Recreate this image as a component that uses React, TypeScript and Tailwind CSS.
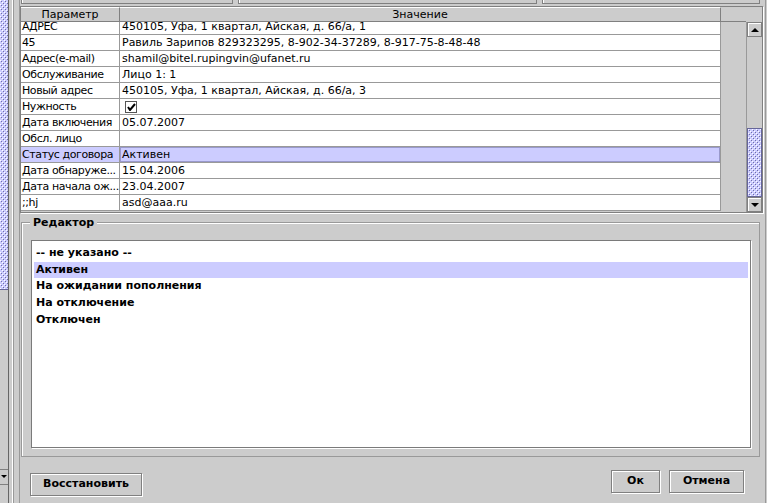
import React from 'react';

type Row = { k: string; v: string; check?: boolean; selected?: boolean };

const rows: Row[] = [
  { k: 'АДРЕС', v: '450105, Уфа, 1 квартал, Айская, д. 66/а, 1' },
  { k: '45', v: 'Равиль Зарипов 829323295, 8-902-34-37289, 8-917-75-8-48-48' },
  { k: 'Адрес(e-mail)', v: 'shamil@bitel.rupingvin@ufanet.ru' },
  { k: 'Обслуживание', v: 'Лицо 1: 1' },
  { k: 'Новый адрес', v: '450105, Уфа, 1 квартал, Айская, д. 66/а, 3' },
  { k: 'Нужность', v: '', check: true },
  { k: 'Дата включения', v: '05.07.2007' },
  { k: 'Обсл. лицо', v: '' },
  { k: 'Статус договора', v: 'Активен', selected: true },
  { k: 'Дата обнаруже...', v: '15.04.2006' },
  { k: 'Дата начала ож...', v: '23.04.2007' },
  { k: ';;hj', v: 'asd@aaa.ru' },
];

const options = ['-- не указано --', 'Активен', 'На ожидании пополнения', 'На отключение', 'Отключен'];

// metal style bumps texture
const Bumps: React.FC<{ id: string }> = ({ id }) => (
  <svg width="100%" height="100%" className="block">
    <defs>
      <pattern id={id} width="4" height="4" patternUnits="userSpaceOnUse">
        <rect width="4" height="4" fill="#ccccff" />
        <rect x="0" y="0" width="1" height="1" fill="#ffffff" />
        <rect x="2" y="2" width="1" height="1" fill="#ffffff" />
        <rect x="1" y="1" width="1" height="1" fill="#6f6fa8" />
        <rect x="3" y="3" width="1" height="1" fill="#6f6fa8" />
      </pattern>
    </defs>
    <rect width="100%" height="100%" fill={`url(#${id})`} />
  </svg>
);

const ArrowBtn: React.FC<{ up?: boolean }> = ({ up }) => (
  <div className="h-[15px] w-[15px] shrink-0 border border-[#808080] bg-[#cccccc] shadow-[inset_1px_1px_0_#ffffff] flex items-center justify-center">
    <svg width="8" height="4" viewBox="0 0 8 4">
      {up ? <path d="M0 4 L4 0 L8 4 Z" fill="#000" /> : <path d="M0 0 L8 0 L4 4 Z" fill="#000" />}
    </svg>
  </div>
);

const Button: React.FC<{ label: string; w: string }> = ({ label, w }) => (
  <button className={`${w} h-[23px] border border-[#808080] shadow-[inset_1px_1px_0_#ffffff,1px_1px_0_#ffffff] bg-[#cccccc] text-[11px] font-bold text-black`}>
    {label}
  </button>
);

export default function App() {
  return (
    <div className="flex w-[767px] h-[503px] overflow-hidden bg-[#cccccc] font-['DejaVu_Sans',sans-serif] text-black">
      {/* neighbour scrollbar on the left */}
      <div className="w-[9px] shrink-0 flex flex-col border-r border-[#666666]">
        <div className="h-[290px] border-b border-[#666699]">
          <Bumps id="lb" />
        </div>
        <div className="flex-1" />
        <div className="h-[16px] flex items-center justify-end pr-[1px] border-t border-b border-[#808080]">
          <svg width="6" height="4" viewBox="0 0 6 4">
            <path d="M0 0 L6 0 L3 3 Z" fill="#000" />
          </svg>
        </div>
        <div className="h-[18px]" />
      </div>

      {/* split divider */}
      <div className="w-[11px] shrink-0 flex">
        <div className="w-[3px]" />
        <div className="w-[1px] bg-white" />
        <div className="w-[1px] bg-[#999999]" />
        <div className="w-[5px]" />
        <div className="w-[1px] bg-[#999999]" />
      </div>

      {/* main */}
      <div className="w-[743px] shrink-0 flex flex-col">
        {/* cut off buttons on top */}
        <div className="h-[6px] flex gap-[5px] pl-[1px]">
          <div className="w-[212px] h-[4px] border-x border-b border-[#808080] shadow-[inset_1px_0_0_#ffffff]" />
          <div className="w-[299px] h-[4px] border-x border-b border-[#808080] shadow-[inset_1px_0_0_#ffffff]" />
          <div className="w-[218px] h-[4px] border-x border-b border-[#808080] shadow-[inset_1px_0_0_#ffffff]" />
        </div>

        {/* table scroll pane */}
        <div className="h-[207px] flex border border-[#808080] shadow-[1px_1px_0_#ffffff]">
          <div className="w-[725px] flex flex-col">
            <div className="h-[15px] flex text-[11px] leading-[14px] border-b border-[#808080]">
              <div className="w-[99px] border-r border-[#808080] border-t border-t-white text-center">Параметр</div>
              <div className="w-[601px] border-r border-[#808080] border-t border-t-white text-center">Значение</div>
            </div>
            <div className="flex-1 overflow-hidden">
              <div className="-mt-[3px]">
                {rows.map((r, i) => (
                  <div key={i} className={`flex h-[16px] w-[700px] border-b border-[#999999] text-[11px] leading-[15px] ${r.selected ? 'bg-[#ccccff]' : 'bg-white'}`}>
                    <div className="w-[99px] shrink-0 border-r border-[#999999] pl-[1px] tracking-[-0.4px] whitespace-nowrap overflow-hidden">{r.k}</div>
                    <div className={`flex-1 border-r border-[#999999] pl-[2px] whitespace-nowrap overflow-hidden ${r.selected ? 'shadow-[inset_0_0_0_1px_#9999cc]' : ''}`}>
                      {r.check ? (
                        <div className="mt-[2px] ml-[3px] w-[12px] h-[12px] border border-[#555555] bg-white flex items-center justify-center">
                          <svg width="9" height="8" viewBox="0 0 9 8">
                            <path d="M1 4 L3 7 L8 1" stroke="#000" strokeWidth="2" fill="none" />
                          </svg>
                        </div>
                      ) : (
                        r.v
                      )}
                    </div>
                  </div>
                ))}
              </div>
            </div>
          </div>
          <div className="w-[16px] flex flex-col">
            <div className="h-[15px]" />
            <div className="flex-1 flex flex-col border-l border-[#999999]">
              <ArrowBtn up />
              <div className="h-[91px]" />
              <div className="h-[69px] border border-[#666699]">
                <Bumps id="tb" />
              </div>
              <div className="flex-1" />
              <ArrowBtn />
            </div>
          </div>
        </div>

        {/* editor titled panel */}
        <div className="relative mt-[9px] ml-[1px] mr-[3px] h-[235px] border border-[#999999] shadow-[inset_1px_1px_0_#ffffff] pt-[17px] pl-[9px] pr-[8px] pb-[8px]">
          <div className="absolute -top-[7px] left-[8px] px-[3px] bg-[#cccccc] text-[11px] font-bold leading-[13px]">Редактор</div>
          <div className="h-full bg-white border border-[#7a7a7a] shadow-[1px_1px_0_#ffffff] pt-[4px] px-[2px]">
            {options.map((o, i) => (
              <div key={i} className={`h-[16.7px] leading-[16.7px] pl-[2px] text-[11px] font-bold whitespace-nowrap ${i === 1 ? 'bg-[#ccccff]' : ''}`}>
                {o}
              </div>
            ))}
          </div>
        </div>

        {/* buttons */}
        <div className="mt-[13px] flex">
          <div className="ml-[10px]">
            <Button label="Восстановить" w="w-[112px]" />
          </div>
          <div className="ml-auto flex gap-[9px] mr-[19px]">
            <Button label="Ок" w="w-[49px]" />
            <Button label="Отмена" w="w-[75px]" />
          </div>
        </div>
      </div>

      {/* right edge */}
      <div className="flex-1 flex">
        <div className="w-[2px]" />
        <div className="w-[1px] bg-[#999999]" />
      </div>
    </div>
  );
}
